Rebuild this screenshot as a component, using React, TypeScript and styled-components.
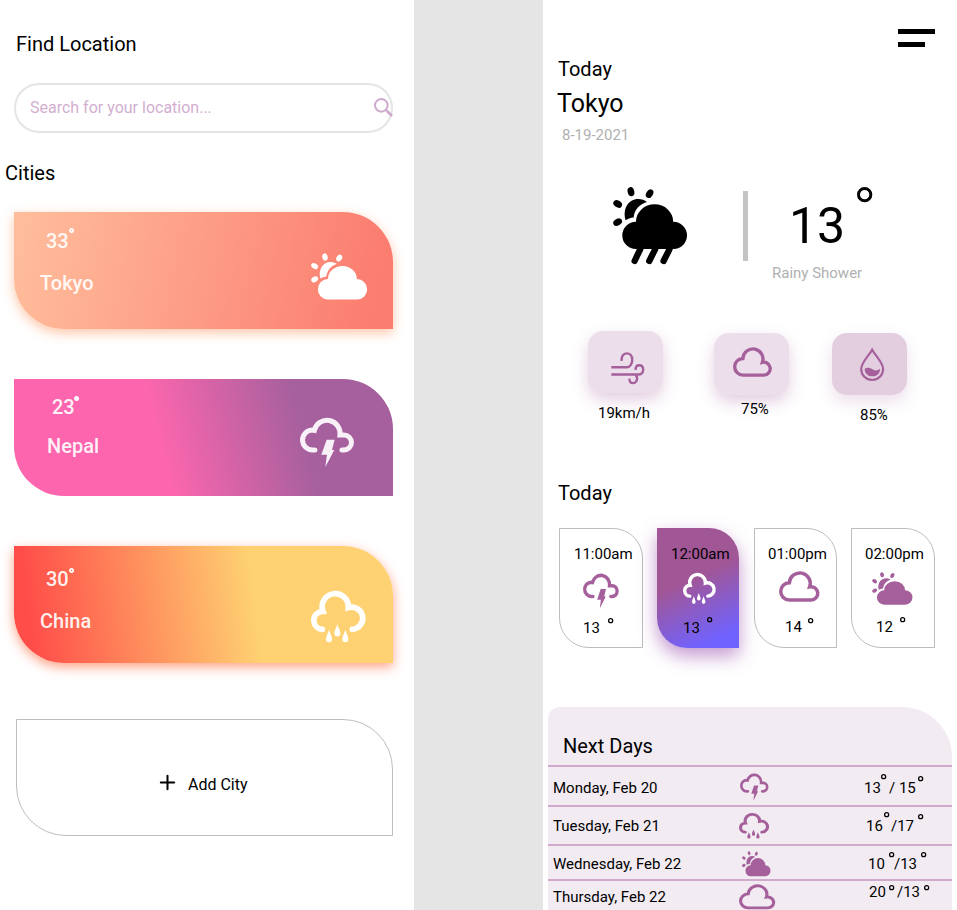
import React from "react";
import styled, { createGlobalStyle, css } from "styled-components";

const PURPLE = "#a5609c";

const GlobalStyle = createGlobalStyle`
  * { box-sizing: border-box; }
  html, body { margin: 0; padding: 0; }
  body {
    background: #e5e5e5;
    font-family: Roboto, "Liberation Sans", sans-serif;
    color: #000;
    overflow: hidden;
  }
`;

/* ---------- layout ---------- */

const Page = styled.div`
  display: flex;
  justify-content: space-between;
  width: 957px;
  height: 910px;
  overflow: hidden;
`;

const Screen = styled.main`
  display: flex;
  flex-direction: column;
  width: 414px;
  height: 910px;
  overflow: hidden;
  background: #fff;
`;

const Heading = styled.h2<{ $top: number; $left: number }>`
  margin: ${(p) => p.$top}px 0 0 ${(p) => p.$left}px;
  font-size: 20px;
  font-weight: 400;
  line-height: 24px;
  white-space: nowrap;
`;

const Icon = styled.svg<{ $w: number; $h: number; $top?: number; $left?: number; $right?: number; $color?: string }>`
  display: block;
  flex: none;
  width: ${(p) => p.$w}px;
  height: ${(p) => p.$h}px;
  margin: ${(p) => p.$top ?? 0}px ${(p) => p.$right ?? 0}px 0 ${(p) => p.$left ?? 0}px;
  color: ${(p) => p.$color ?? PURPLE};
  overflow: visible;
`;

/* ---------- icons ---------- */

type IconName = "sun" | "thunder" | "rain" | "cloud" | "shower" | "wind" | "drop" | "search";

const drop = (x: number, y: number) =>
  `M${x} ${y}c3 12 9 18 9 28.500a9 9 0 0 1-18 0c0-10.500 6-16.500 9-28.500z`;

const ICONS: Record<IconName, { box: string; art: React.ReactNode }> = {
  sun: {
    box: "0 0 170 139",
    art: (
      <g fill="currentColor">
        <ellipse cx="42" cy="12" rx="8" ry="11" transform="rotate(-14 42 12)" />
        <ellipse cx="85" cy="15" rx="8" ry="11" transform="rotate(32 85 15)" />
        <ellipse cx="11" cy="39" rx="8" ry="11" transform="rotate(-58 11 39)" />
        <ellipse cx="11" cy="79" rx="8" ry="11" transform="rotate(60 11 79)" />
        <path d="M28 76C21 50 36 27 59 27C67 27 74 30 78 33C60 38 49 52 46 70C39 71 33 73 28 76Z" />
        <path d="M51 139A30.500 30.500 0 0 1 51 78A43.500 39 0 0 1 138 78A30.500 30.500 0 0 1 139 139Z" />
      </g>
    ),
  },
  shower: {
    box: "0 0 224 232",
    art: (
      <g fill="currentColor">
        <ellipse cx="54" cy="14" rx="10" ry="14" transform="rotate(-14 54 14)" />
        <ellipse cx="110" cy="20" rx="10" ry="14" transform="rotate(32 110 20)" />
        <ellipse cx="14" cy="51" rx="10" ry="14" transform="rotate(-58 14 51)" />
        <ellipse cx="14" cy="106" rx="10" ry="14" transform="rotate(60 14 106)" />
        <path d="M38 100C28 66 46 36 76 36C86 36 96 40 102 45C80 52 65 66 62 92C52 93 45 96 38 100Z" />
        <path d="M69 187A41 41 0 0 1 69 105A56 53 0 0 1 181 105A41 41 0 0 1 182 187Z" />
        <path d="M82 187L65 223M127 187L109 223M170 187L152 223" fill="none" stroke="currentColor" strokeWidth="19" strokeLinecap="round" />
      </g>
    ),
  },
  thunder: {
    box: "0 0 163 150",
    art: (
      <>
        <path
          d="M45 99H37.500A29.900 29.900 0 0 1 37.500 39.200L43 40A39.200 39.200 0 0 1 120 54H132A22.500 22.500 0 0 1 132 99H126"
          fill="none"
          stroke="currentColor"
          strokeWidth="15"
          strokeLinecap="round"
        />
        <path d="M80 68H104L96 99H103L76 150L81 113H64Z" fill="currentColor" />
      </>
    ),
  },
  rain: {
    box: "0 0 165 154",
    art: (
      <>
        <path
          d="M34 115C18 114 8.500 102 8.500 88C8.500 72 20 62 36 61A39.300 39.300 0 1 1 112 50A33.300 33.300 0 1 1 124 115"
          fill="none"
          stroke="currentColor"
          strokeWidth="17"
          strokeLinecap="round"
        />
        <path d={drop(54, 116) + drop(79, 99) + drop(103, 116)} fill="currentColor" />
      </>
    ),
  },
  cloud: {
    box: "0 0 121 89",
    art: (
      <path
        d="M31 84A25.750 25.750 0 0 1 31 32.500A31.400 31.400 0 1 1 92 44.500A20 20 0 1 1 97 84Z"
        fill="none"
        stroke="currentColor"
        strokeWidth="10.500"
      />
    ),
  },
  wind: {
    box: "0 0 101 98",
    art: (
      <path
        d="M1 46H48C58 46 64 34 64 24C64 10 56 4 47 4C37 4 31 13 32 27M1 68H84C93 68 97 60 97 53C97 44 91 40 85 40C78 40 74 46 74 54M74 70C79 73 79 80 78 84C77 90 71 94 66 94C59 94 55 89 56 80"
        fill="none"
        stroke="currentColor"
        strokeWidth="7.200"
      />
    ),
  },
  drop: {
    box: "0 0 73 99",
    art: (
      <>
        <path d="M36.500 5C28 22 3.500 44 3.500 63A33 33 0 0 0 69.500 63C69.500 44 45 22 36.500 5Z" fill="none" stroke="currentColor" strokeWidth="6.500" />
        <path d="M14 62C22 58 30 59 37 64C45 69 53 68 60 62C61 77 50 85 37 85C24 85 14 76 14 62Z" fill="currentColor" />
      </>
    ),
  },
  search: {
    box: "0 0 57 57",
    art: (
      <g fill="none" stroke="currentColor">
        <circle cx="22" cy="22" r="19" strokeWidth="6" />
        <path d="M35 35L40 40" strokeWidth="6" />
        <path d="M39 39L54 54" strokeWidth="8" />
      </g>
    ),
  },
};

type GlyphProps = { name: IconName; w: number; h: number; top?: number; left?: number; right?: number; color?: string };

const Glyph = ({ name, w, h, top, left, right, color }: GlyphProps) => (
  <Icon $w={w} $h={h} $top={top} $left={left} $right={right} $color={color} viewBox={ICONS[name].box} preserveAspectRatio="none" aria-hidden>
    {ICONS[name].art}
  </Icon>
);

type DegreeProps = { size?: number; stroke?: number; top: number; left: number; color?: string };

const Degree = ({ size = 5.300, stroke = 1.250, top, left, color = "#000" }: DegreeProps) => (
  <Icon $w={size} $h={size} $top={top} $left={left} $color={color} viewBox={`0 0 ${size} ${size}`} aria-hidden>
    <circle cx={size / 2} cy={size / 2} r={(size - stroke) / 2} fill="none" stroke="currentColor" strokeWidth={stroke} />
  </Icon>
);

/* ---------- locations screen ---------- */

const SearchBar = styled.label`
  display: flex;
  flex: none;
  align-items: flex-start;
  justify-content: space-between;
  width: 379px;
  height: 50px;
  margin: 27px 0 0 14px;
  border: 2px solid #e5e5e5;
  border-radius: 25px;
  padding-left: 14px;
`;

const SearchText = styled.span`
  margin-top: 13px;
  font-size: 16px;
  line-height: 20px;
  color: #d2afd0;
`;

const CityList = styled.section`
  display: flex;
  flex-direction: column;
  gap: 50px;
  margin: 27px 0 0 14px;
`;

const CityCard = styled.article<{ $bg: string; $shadow: string }>`
  display: flex;
  flex: none;
  align-items: flex-start;
  justify-content: space-between;
  width: 379px;
  height: 117px;
  border-radius: 0 50px 0 50px;
  background: ${(p) => p.$bg};
  box-shadow: ${(p) => p.$shadow};
  color: rgba(255, 255, 255, 0.93);
`;

const CityInfo = styled.div<{ $top: number; $left: number }>`
  display: flex;
  flex-direction: column;
  padding: ${(p) => p.$top}px 0 0 ${(p) => p.$left}px;
  font-size: 20px;
  font-weight: 500;
  line-height: 24px;
`;

const CityTemp = styled.div<{ $indent: number }>`
  display: flex;
  align-items: flex-start;
  height: 24px;
  margin-left: ${(p) => p.$indent}px;
`;

const CityName = styled.div<{ $gap: number }>`
  margin-top: ${(p) => p.$gap}px;
`;

const CityIcon = styled.div<{ $top: number; $right: number }>`
  padding: ${(p) => p.$top}px ${(p) => p.$right}px 0 0;
`;

const AddCity = styled.button`
  display: flex;
  flex: none;
  align-items: flex-start;
  width: 377px;
  height: 117px;
  margin: 56px 0 0 16px;
  padding: 54px 0 0 143px;
  border: 1px solid #bdbdbd;
  border-radius: 0 50px 0 50px;
  background: #fff;
  font: 400 16px/20px Roboto, "Liberation Sans", sans-serif;
  color: #000;
`;

const AddLabel = styled.span`
  margin: 1px 0 0 13px;
`;

const cities = [
  {
    name: "Tokyo", temp: "33", top: 17, left: 26, indent: 6, gap: 18, icon: "sun" as IconName, w: 56.500, h: 46.500, iconTop: 41, iconRight: 25.500,
    ring: 1.700, ringTop: -1, ringLeft: 0.500,
    bg: "linear-gradient(102deg, #ffbd9b 2%, #fb7d70 94%)", shadow: "0 4px 12px rgba(255, 160, 110, 0.6)", color: "#fff",
  },
  {
    name: "Nepal", temp: "23", top: 16, left: 33, indent: 5, gap: 15, icon: "thunder" as IconName, w: 54.300, h: 50, iconTop: 37.700, iconRight: 38.700,
    ring: 2.300, ringTop: 0.700, ringLeft: -0.600,
    bg: "linear-gradient(75.500deg, #fd66ae 38.600%, #a5609d 75.400%)", shadow: "none", color: "#f9f1f8",
  },
  {
    name: "China", temp: "30", top: 21, left: 26, indent: 6, gap: 18, icon: "rain" as IconName, w: 55, h: 51.300, iconTop: 44.700, iconRight: 27,
    ring: 1.700, ringTop: 1, ringLeft: 0.500,
    bg: "linear-gradient(83deg, #ff4d49 5%, #fed272 63.500%)", shadow: "0 4px 12px rgba(255, 100, 50, 0.6)", color: "#fff",
  },
];

const Locations = () => (
  <Screen>
    <Heading $top={32} $left={16}>Find Location</Heading>
    <SearchBar>
      <SearchText>Search for your location...</SearchText>
      <Glyph name="search" w={19} h={19} top={13} right={-2} color="#cfa9cd" />
    </SearchBar>
    <Heading $top={28} $left={5}>Cities</Heading>
    <CityList>
      {cities.map((c) => (
        <CityCard key={c.name} $bg={c.bg} $shadow={c.shadow}>
          <CityInfo $top={c.top} $left={c.left}>
            <CityTemp $indent={c.indent}>
              {c.temp}
              <Degree size={5} stroke={c.ring} top={c.ringTop} left={c.ringLeft} color="#fff" />
            </CityTemp>
            <CityName $gap={c.gap}>{c.name}</CityName>
          </CityInfo>
          <CityIcon $top={c.iconTop} $right={c.iconRight}>
            <Glyph name={c.icon} w={c.w} h={c.h} color={c.color} />
          </CityIcon>
        </CityCard>
      ))}
    </CityList>
    <AddCity>
      <Icon $w={15} $h={15} $top={1} $color="#000" viewBox="0 0 15 15">
        <path d="M7.500 0.800V14.200M0.800 7.500H14.200" stroke="currentColor" strokeWidth="2" strokeLinecap="round" />
      </Icon>
      <AddLabel>Add City</AddLabel>
    </AddCity>
  </Screen>
);

/* ---------- forecast screen ---------- */

const Menu = styled.div`
  display: flex;
  flex: none;
  flex-direction: column;
  gap: 8px;
  width: 37px;
  margin: 29px 0 0 355px;
`;

const MenuBar = styled.span<{ $w: number }>`
  width: ${(p) => p.$w}px;
  height: 5px;
  background: #000;
`;

const City = styled.h1`
  margin: 8px 0 0 14px;
  font-size: 25px;
  font-weight: 400;
  line-height: 30px;
`;

const Muted = styled.span<{ $top: number; $left: number }>`
  margin: ${(p) => p.$top}px 0 0 ${(p) => p.$left}px;
  font-size: 15px;
  line-height: 20px;
  color: #b0b0b0;
  white-space: nowrap;
`;

const Now = styled.section`
  display: flex;
  flex: none;
  align-items: flex-start;
  height: 104px;
  margin-top: 42px;
`;

const Divider = styled.span`
  flex: none;
  width: 5px;
  height: 70px;
  margin: 4px 0 0 56px;
  background: #c4c4c4;
`;

const NowInfo = styled.div`
  display: flex;
  flex-direction: column;
  margin-left: 24px;
`;

const NowTemp = styled.div`
  display: flex;
  height: 69px;
  padding-left: 17px;
  align-items: flex-start;
  font-size: 50px;
  line-height: 60px;
`;

const NowValue = styled.span`
  width: 56px;
  margin-top: 9px;
`;

const Stats = styled.section`
  display: flex;
  flex: none;
  align-items: flex-start;
  height: 100px;
  margin: 40px 0 0 45px;
`;

const Stat = styled.div<{ $top: number; $left: number }>`
  display: flex;
  flex-direction: column;
  width: 75px;
  margin: ${(p) => p.$top}px 0 0 ${(p) => p.$left}px;
`;

const Tile = styled.div<{ $bg: string; $faint?: boolean }>`
  display: flex;
  align-items: flex-start;
  height: 62px;
  border-radius: 15px;
  background: ${(p) => p.$bg};
  box-shadow: 0 7px 16px rgba(165, 96, 156, ${(p) => (p.$faint ? 0.2 : 0.3)});
`;

const Small = styled.span<{ $top: number; $left: number; $w?: number }>`
  flex: none;
  ${(p) => p.$w && css`width: ${p.$w}px;`}
  margin: ${(p) => p.$top}px 0 0 ${(p) => p.$left}px;
  font-size: 15px;
  line-height: 20px;
  white-space: nowrap;
`;

const Hours = styled.section`
  display: flex;
  flex: none;
  align-items: flex-start;
  gap: 14px;
  height: 120px;
  margin: 23px 0 0 16px;
`;

const HourCard = styled.article<{ $w: number; $shift?: number; $active?: boolean }>`
  display: flex;
  flex: none;
  flex-direction: column;
  align-items: flex-start;
  width: ${(p) => p.$w}px;
  height: 120px;
  margin-left: ${(p) => p.$shift ?? 0}px;
  border-radius: 0 30px 0 30px;
  border: 1px solid #bdbdbd;
  ${(p) =>
    p.$active &&
    css`
      border: 0;
      padding: 1px;
      background: linear-gradient(155deg, #a15696 42%, #7062ff 88%);
      box-shadow: 0 8px 18px rgba(150, 70, 170, 0.55);
    `}
`;

const HourIcon = styled.div`
  flex: none;
  height: 45px;
`;

const Row = styled.div`
  display: flex;
  align-items: flex-start;
`;

const NextDays = styled.section`
  display: flex;
  flex: none;
  flex-direction: column;
  width: 404px;
  height: 203px;
  margin: 59px 0 0 5px;
  overflow: hidden;
  border-radius: 12px 50px 0 0;
  background: #f2ebf2;
`;

const DaysHead = styled.header`
  flex: none;
  display: flex;
  height: 58px;
`;

const DayRow = styled.div<{ $h: number }>`
  display: flex;
  flex: none;
  align-items: flex-start;
  height: ${(p) => p.$h}px;
  border-top: 2px solid #d0aacd;
`;

const DayName = styled(Small)`
  width: 182px;
`;

const DayIcon = styled.div`
  flex: none;
  width: 129px;
`;

const hours = [
  { time: "11:00am", w: 84, tl: 14, icon: "thunder" as IconName, iw: 36, ih: 35.500, it: 8.700, il: 23, t: "13", x: 23, tt: 9, dt: 9.300, dx: 8.300 },
  { time: "12:00am", w: 82, tl: 13, icon: "rain" as IconName, iw: 33, ih: 31, it: 9.300, il: 25, t: "13", x: 25, tt: 9, dt: 7.500, dx: 6.700, active: true },
  { time: "01:00pm", w: 83, shift: 1, tl: 13, icon: "cloud" as IconName, iw: 40.300, ih: 29.700, it: 8, il: 23.700, t: "14", x: 30, tt: 8, dt: 9.200, dx: 6.200 },
  { time: "02:00pm", w: 84, tl: 13, icon: "sun" as IconName, iw: 40.700, ih: 32.700, it: 8, il: 20.300, t: "12", x: 24, tt: 8, dt: 7.500, dx: 7.300 },
];

const days = [
  { day: "Monday, Feb 20", h: 40, tt: 11, icon: "thunder" as IconName, iw: 28.700, ih: 27.700, it: 6, il: 4.700, a: "13", ax: 0, at: 11, r1x: -0.300, r1t: 7, b: "/ 15", bx: 3, bw: 28, r2x: 0.700, r2t: 9 },
  { day: "Tuesday, Feb 21", h: 39, tt: 9, icon: "rain" as IconName, iw: 30.300, ih: 25.700, it: 6, il: 4, a: "16", ax: 2, at: 9, r1x: 1, r1t: 5.300, b: "/17", bx: 1.700, bw: 24, r2x: 2.700, r2t: 7.300 },
  { day: "Wednesday, Feb 22", h: 35, tt: 8, icon: "sun" as IconName, iw: 28.700, ih: 25.300, it: 4.700, il: 6.700, a: "10", ax: 4, at: 8, r1x: 3.700, r1t: 5.700, b: "/13", bx: 0, bw: 24, r2x: 2.700, r2t: 6.300 },
  { day: "Thursday, Feb 22", h: 40, tt: 6, icon: "cloud" as IconName, iw: 36, ih: 24.300, it: 4, il: 4, a: "20", ax: 5, at: 1, r1x: 2.700, r1t: 4, b: "/13", bx: 3, bw: 24, r2x: 2.700, r2t: 4 },
];

const Forecast = () => (
  <Screen>
    <Menu>
      <MenuBar $w={37} />
      <MenuBar $w={27} />
    </Menu>
    <Heading $top={10} $left={15}>Today</Heading>
    <City>Tokyo</City>
    <Muted $top={6} $left={19}>8-19-2021</Muted>
    <Now>
      <Glyph name="shower" w={74.500} h={77} left={69.500} color="#000" />
      <Divider />
      <NowInfo>
        <NowTemp>
          <NowValue>13</NowValue>
          <Degree size={15.300} stroke={3} top={0} left={11.800} />
        </NowTemp>
        <Muted $top={7} $left={0}>Rainy Shower</Muted>
      </NowInfo>
    </Now>
    <Stats>
      <Stat $top={0} $left={0}>
        <Tile $bg="#ecdeeb"><Glyph name="wind" w={33.500} h={32.500} top={20.700} left={22.700} /></Tile>
        <Small $top={10} $left={10}>19km/h</Small>
      </Stat>
      <Stat $top={2} $left={51}>
        <Tile $bg="#ecdeeb"><Glyph name="cloud" w={38.700} h={28.700} top={15.300} left={18.700} /></Tile>
        <Small $top={4} $left={27}>75%</Small>
      </Stat>
      <Stat $top={2} $left={43}>
        <Tile $bg="#e3cee0" $faint><Glyph name="drop" w={24.300} h={33} top={14.700} left={27.700} /></Tile>
        <Small $top={10} $left={28}>85%</Small>
      </Stat>
    </Stats>
    <Heading $top={50} $left={15}>Today</Heading>
    <Hours>
      {hours.map((h) => (
        <HourCard key={h.time} $w={h.w} $shift={h.shift} $active={h.active}>
          <Small $top={15} $left={h.tl}>{h.time}</Small>
          <HourIcon>
            <Glyph name={h.icon} w={h.iw} h={h.ih} top={h.it} left={h.il} color={h.active ? "#fff" : PURPLE} />
          </HourIcon>
          <Row>
            <Small $top={h.tt} $left={h.x} $w={17}>{h.t}</Small>
            <Degree top={h.dt} left={h.dx} />
          </Row>
        </HourCard>
      ))}
    </Hours>
    <NextDays>
      <DaysHead>
        <Heading $top={27} $left={15}>Next Days</Heading>
      </DaysHead>
      {days.map((d) => (
        <DayRow key={d.day} $h={d.h}>
          <DayName $top={d.tt} $left={5}>{d.day}</DayName>
          <DayIcon><Glyph name={d.icon} w={d.iw} h={d.ih} top={d.it} left={d.il} /></DayIcon>
          <Small $top={d.at} $left={d.ax} $w={17}>{d.a}</Small>
          <Degree top={d.r1t} left={d.r1x} />
          <Small $top={d.at} $left={d.bx} $w={d.bw}>{d.b}</Small>
          <Degree top={d.r2t} left={d.r2x} />
        </DayRow>
      ))}
    </NextDays>
  </Screen>
);

export default function App() {
  return (
    <>
      <GlobalStyle />
      <Page>
        <Locations />
        <Forecast />
      </Page>
    </>
  );
}
